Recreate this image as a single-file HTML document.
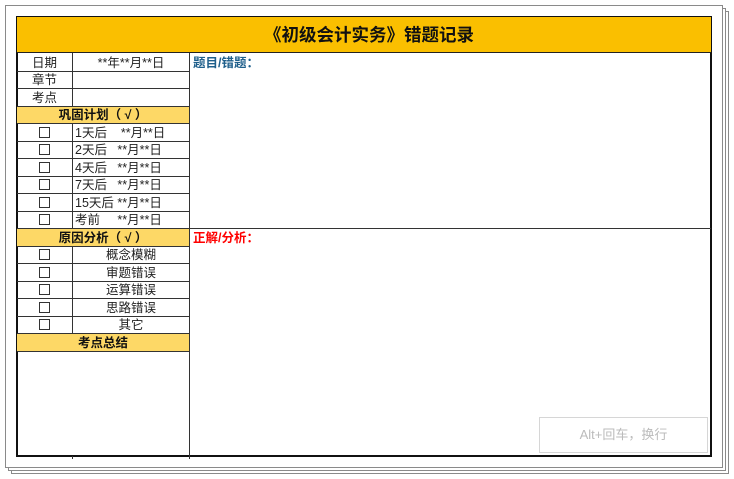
<!DOCTYPE html>
<html><head><meta charset="utf-8"><style>
body{margin:0;width:734px;height:479px;background:#fff;position:relative;overflow:hidden;font-family:"Liberation Sans","Noto Sans CJK SC",sans-serif;}
.pg{position:absolute;border:1px solid #8a8a8a;background:#fff;}
.a{position:absolute;box-sizing:border-box;}
.c{position:absolute;box-sizing:border-box;font-size:12.5px;color:#222;line-height:17px;white-space:nowrap;margin-top:1px;}
.h{font-weight:bold;text-align:center;color:#111;}
.hl{position:absolute;height:1px;background:#333;}
.vl{position:absolute;width:1px;background:#333;}
.cb{display:inline-block;width:9px;height:9px;border:1px solid #333;vertical-align:middle;margin-top:-2px;}
</style></head><body>
<div class="pg" style="left:11px;top:11px;width:716px;height:461px"></div>
<div class="pg" style="left:8px;top:8px;width:716px;height:461px"></div>
<div class="pg" style="left:5px;top:5px;width:716px;height:461px"></div>

<div class="a" style="left:16px;top:16px;width:696px;height:441px;border:2px solid #111;"></div>
<div class="a" style="left:17px;top:17px;width:694px;height:36px;background:#fabf00;border-bottom:1px solid #222;"></div>
<div class="c" style="left:17px;top:17px;width:694px;height:36px;line-height:36px;text-align:center;font-size:17.5px;font-weight:bold;color:#111;padding-left:10px;margin-top:0">《初级会计实务》错题记录</div>

<div class="a" style="left:17px;top:106px;width:172px;height:17px;background:#fdd866"></div>
<div class="a" style="left:17px;top:228px;width:172px;height:18px;background:#fdd866"></div>
<div class="a" style="left:17px;top:333px;width:172px;height:18px;background:#fdd866"></div>

<div class="hl" style="left:17px;top:71px;width:172px"></div>
<div class="hl" style="left:17px;top:88px;width:172px"></div>
<div class="hl" style="left:17px;top:106px;width:172px"></div>
<div class="hl" style="left:17px;top:123px;width:172px"></div>
<div class="hl" style="left:17px;top:141px;width:172px"></div>
<div class="hl" style="left:17px;top:158px;width:172px"></div>
<div class="hl" style="left:17px;top:176px;width:172px"></div>
<div class="hl" style="left:17px;top:193px;width:172px"></div>
<div class="hl" style="left:17px;top:211px;width:172px"></div>
<div class="hl" style="left:17px;top:228px;width:694px"></div>
<div class="hl" style="left:17px;top:246px;width:172px"></div>
<div class="hl" style="left:17px;top:263px;width:172px"></div>
<div class="hl" style="left:17px;top:281px;width:172px"></div>
<div class="hl" style="left:17px;top:298px;width:172px"></div>
<div class="hl" style="left:17px;top:316px;width:172px"></div>
<div class="hl" style="left:17px;top:333px;width:172px"></div>
<div class="hl" style="left:17px;top:351px;width:172px"></div>

<div class="vl" style="left:72px;top:53px;height:53px"></div>
<div class="vl" style="left:72px;top:123px;height:105px"></div>
<div class="vl" style="left:72px;top:246px;height:87px"></div>
<div class="vl" style="left:72px;top:456px;height:3px"></div>
<div class="vl" style="left:189px;top:53px;height:406px"></div>

<div class="c" style="left:17px;top:54px;width:55px;text-align:center">日期</div>
<div class="c" style="left:73px;top:54px;width:116px;text-align:center">**年**月**日</div>
<div class="c" style="left:17px;top:71px;width:55px;text-align:center">章节</div>
<div class="c" style="left:17px;top:89px;width:55px;text-align:center">考点</div>
<div class="c h" style="left:17px;top:106px;width:172px">巩固计划（ √ ）</div>

<div class="c" style="left:17px;top:124px;width:55px;text-align:center"><span class="cb"></span></div>
<div class="c" style="left:75px;top:124px">1天后&nbsp;&nbsp;&nbsp;&nbsp;**月**日</div>
<div class="c" style="left:17px;top:141px;width:55px;text-align:center"><span class="cb"></span></div>
<div class="c" style="left:75px;top:141px">2天后&nbsp;&nbsp;&nbsp;**月**日</div>
<div class="c" style="left:17px;top:159px;width:55px;text-align:center"><span class="cb"></span></div>
<div class="c" style="left:75px;top:159px">4天后&nbsp;&nbsp;&nbsp;**月**日</div>
<div class="c" style="left:17px;top:176px;width:55px;text-align:center"><span class="cb"></span></div>
<div class="c" style="left:75px;top:176px">7天后&nbsp;&nbsp;&nbsp;**月**日</div>
<div class="c" style="left:17px;top:194px;width:55px;text-align:center"><span class="cb"></span></div>
<div class="c" style="left:75px;top:194px">15天后 **月**日</div>
<div class="c" style="left:17px;top:211px;width:55px;text-align:center"><span class="cb"></span></div>
<div class="c" style="left:75px;top:211px">考前&nbsp;&nbsp;&nbsp;&nbsp;&nbsp;**月**日</div>

<div class="c h" style="left:17px;top:229px;width:172px">原因分析（ √ ）</div>
<div class="c" style="left:17px;top:246px;width:55px;text-align:center"><span class="cb"></span></div>
<div class="c" style="left:73px;top:246px;width:116px;text-align:center">概念模糊</div>
<div class="c" style="left:17px;top:264px;width:55px;text-align:center"><span class="cb"></span></div>
<div class="c" style="left:73px;top:264px;width:116px;text-align:center">审题错误</div>
<div class="c" style="left:17px;top:281px;width:55px;text-align:center"><span class="cb"></span></div>
<div class="c" style="left:73px;top:281px;width:116px;text-align:center">运算错误</div>
<div class="c" style="left:17px;top:299px;width:55px;text-align:center"><span class="cb"></span></div>
<div class="c" style="left:73px;top:299px;width:116px;text-align:center">思路错误</div>
<div class="c" style="left:17px;top:316px;width:55px;text-align:center"><span class="cb"></span></div>
<div class="c" style="left:73px;top:316px;width:116px;text-align:center">其它</div>
<div class="c h" style="left:17px;top:334px;width:172px">考点总结</div>

<div class="c" style="left:193px;top:54px;font-weight:bold;color:#1f5f8b">题目/错题：</div>
<div class="c" style="left:193px;top:229px;font-weight:bold;color:#ff0000">正解/分析：</div>

<div class="a" style="left:539px;top:417px;width:169px;height:36px;border:1px solid #d6d6d6;background:#fff;font-size:13px;color:#bbb;text-align:center;line-height:34px">Alt+回车，换行</div>
</body></html>
